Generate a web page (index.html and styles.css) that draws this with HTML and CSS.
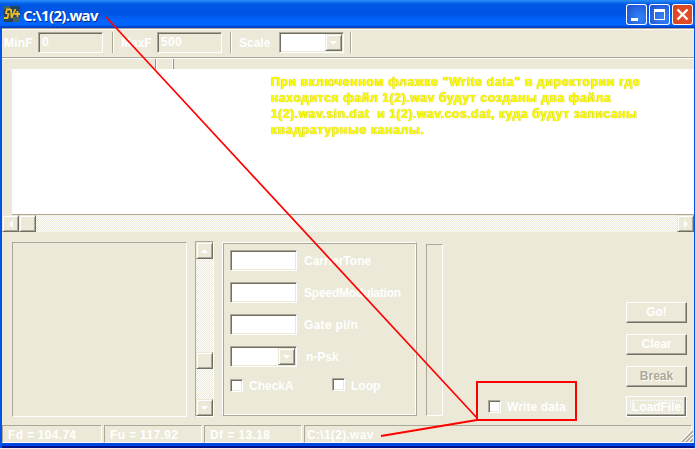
FILE: index.html
```html
<!DOCTYPE html>
<html lang="ru">
<head>
<meta charset="utf-8">
<title>C:\1(2).wav</title>
<link rel="stylesheet" href="styles.css">
</head>
<body>
<div class="window">
  <header class="titlebar">
    <svg class="app-icon" width="16" height="16" viewBox="0 0 16 16"><rect width="16" height="16" fill="#264458"/><path d="M0 0h6v3H0zM9 11h7v5H9z" fill="#42626c"/><path d="M6.500 3.500H3L2 7l2.500 1-1 4H0M7 3l.5 9L11.500 3M10.500 8H16M13.500 5v6" fill="none" stroke="#eebc22" stroke-width="1.800"/></svg>
    <h1>C:\1(2).wav</h1>
    <div class="caption-buttons">
      <span class="cap"><svg width="21" height="21"><path d="M5 14h7v3H5z" fill="#fff"/></svg></span>
      <span class="cap"><svg width="21" height="21"><path d="M5 5h11v11H5zM6 8v7h9V8z" fill="#fff" fill-rule="evenodd"/></svg></span>
      <span class="cap close"><svg width="21" height="21"><path d="M5.500 5.500l10 10M15.500 5.500l-10 10" stroke="#fff" stroke-width="2.400"/></svg></span>
    </div>
  </header>
  <div class="toolbar">
    <label class="minf">MinF</label><div class="field tool-field">0</div><i class="sep"></i>
    <label class="maxf">MaxF</label><div class="field tool-field">500</div><i class="sep second-sep"></i>
    <label class="scale">Scale</label>
    <div class="field combo"><span class="drop"><svg width="7" height="4"><path d="M0 0h7L3.500 4z" fill="#fff"/></svg></span></div><i class="sep last"></i>
  </div>
  <div class="ruler"><i class="tick"></i><i class="tick second"></i></div>
  <div class="plot">
    <p><span class="l1">При включенном флажке "Write data" в директории где</span><br><span class="l2">находится файл 1(2).wav будут созданы два файла</span><br><span class="l3">1(2).wav.sin.dat&nbsp; и 1(2).wav.cos.dat, куда будут записаны</span><br><span class="l4">квадратурные каналы.</span></p>
  </div>
  <div class="hscroll dither">
    <span class="knob"><svg width="4" height="8"><path d="M4 0v8L0 4z" fill="#fff"/></svg></span><span class="knob"></span>
    <span class="knob end"><svg width="4" height="8"><path d="M0 0v8l4-4z" fill="#fff"/></svg></span>
  </div>
  <main class="body">
    <div class="list sunk"></div>
    <div class="vscroll dither">
      <span class="knob"><svg width="7" height="4"><path d="M0 4h7L3.500 0z" fill="#fff"/></svg></span>
      <span class="knob thumb"></span>
      <span class="knob bottom"><svg width="7" height="4"><path d="M0 0h7L3.500 4z" fill="#fff"/></svg></span>
    </div>
    <section class="group">
      <div class="row"><div class="field"></div><label class="carrier">CarrierTone</label></div>
      <div class="row"><div class="field"></div><label class="speed">SpeedModulation</label></div>
      <div class="row"><div class="field"></div><label class="gate">Gate pi/n</label></div>
      <div class="row"><div class="field combo"><span class="drop"><svg width="7" height="4"><path d="M0 0h7L3.500 4z" fill="#fff"/></svg></span></div><label class="psk">n-Psk</label></div>
      <div class="checks"><span class="box"></span><label class="checka">CheckA</label><span class="box loopbox"></span><label class="loop">Loop</label></div>
    </section>
    <div class="meter sunk"></div>
    <div class="write"><span class="box"></span><label class="writelabel">Write data</label></div>
    <div class="buttons">
      <button>Go!</button><button>Clear</button><button class="disabled">Break</button><button class="load"><span>LoadFile</span></button>
    </div>
  </main>
  <footer class="status">
    <div class="sunk s1"><span>Fd = 104.74</span></div><div class="sunk s2"><span>Fu = 117.92</span></div><div class="sunk s3"><span>Df = 13.18</span></div><div class="sunk s4"><span>C:\1(2).wav</span></div>
    <svg class="grip" width="12" height="12"><path d="M1 12L12 1M5 12L12 5M9 12l3-3" stroke="#aca899" stroke-width="1.600"/><path d="M0 11L11 0M4 11L12 3M8 11l4-4" stroke="#fff"/></svg>
  </footer>
</div>
<svg class="notes" width="695" height="449" fill="none" stroke="#f00">
  <g shape-rendering="crispEdges"><rect x="477" y="382" width="99" height="38" stroke-width="2"/></g>
  <path d="M106 17L477 418" stroke-width="1.700"/><path d="M381 436L477 420" stroke-width="2"/>
</svg>
</body>
</html>
```
FILE: styles.css
```css
* { box-sizing: border-box; }
body { margin: 0; width: 695px; height: 449px; overflow: hidden; background: #f4f2e8; font: bold 12px/16px "Liberation Sans", sans-serif; color: #fff; }
svg { display: block; }
label, span, h1 { white-space: pre; }
.window { width: 695px; height: 448px; background: #ece9d8; border: solid #0054e8; border-width: 0 1px 0 2px; box-shadow: inset 0 -2px #00138c, inset 0 -5px #0046e0; }
.titlebar { height: 28px; margin: 0 -1px 0 -2px; padding: 0 2px 0 4px; display: flex; align-items: center; background: linear-gradient(#2a8cf8 0, #1479f0 2px, #0058e6 4px, #0054e3 14px, #0062fc 19px, #0066ff 25px, #0040c8 27px, #0040c8 28px); }
h1 { margin: 1px 0 0 3px; font: bold 15px/20px "Open Sans", sans-serif; text-shadow: 1px 1px #0a2c88; width: 76px; letter-spacing: -.65px; }
.caption-buttons { margin: 1px 0 0 auto; display: flex; gap: 2px; }
.cap { width: 21px; height: 21px; border-radius: 3px; background: radial-gradient(circle at 65% 65%, #3484fa, #245edb 65%, #1c49bc); box-shadow: inset 0 0 0 1px #fff; }
.close { background: radial-gradient(circle at 60% 60%, #e5512a, #d84824 65%, #bd3515); }
.toolbar { height: 31px; border-top: 1px solid #aca899; border-bottom: 1px solid #fff; box-shadow: inset 0 1px #fff, inset 0 -1px #aca899; display: flex; padding: 3px 0 0 2px; }
.toolbar label { line-height: 22px; height: 21px; }
.minf, .maxf { width: 34px; letter-spacing: .2px; }
.maxf { width: 36px; letter-spacing: 0; }
.scale { width: 40px; }
.field { width: 67px; height: 21px; background: #fff; border: 1px solid; border-color: #aca899 #fff #fff #aca899; box-shadow: inset 1px 1px #716f64, inset -1px -1px #ece9d8; padding: 1px 0 0 3px; flex: none; }
.tool-field { width: 65px; background: #ece9d8; box-shadow: inset 1px 1px #716f64; letter-spacing: .3px; }
.sep { width: 2px; height: 21px; margin: 0 7px 0 9px; background: #aca899; border-right: 1px solid #fff; }
.second-sep { margin-left: 8px; }
.toolbar .combo { width: 65px; }
.sep.last { margin-left: 6px; }
.combo { padding: 1px; }
.drop, .knob { display: flex; align-items: center; justify-content: center; width: 17px; height: 17px; background: #ece9d8; border: 1px solid; border-color: #ece9d8 #716f64 #716f64 #ece9d8; box-shadow: inset 1px 1px #fff, inset -1px -1px #aca899; }
.drop { margin-left: auto; }
.ruler { height: 10px; padding-left: 153px; display: flex; gap: 15px; }
.tick { width: 2px; height: 10px; background: #fff; border-left: 1px solid #00f000; }
.second { border-left: 0; border-right: 1px solid #00f000; }
.plot { height: 146px; margin-left: 10px; background: #fff; border-bottom: 1px solid #aca899; padding: 5px 0 0 259px; }
.plot p { margin: 0; color: #ff0; text-shadow: 0 0 1px #a79e00; font-size: 12.5px; }
.l1 { letter-spacing: .51px; }
.l2 { letter-spacing: .43px; }
.l3 { letter-spacing: .4px; }
.l4 { letter-spacing: .55px; }
.dither { background: repeating-conic-gradient(#fff 0 25%, #ece9d8 0 50%) 0 0 / 2px 2px; }
.hscroll { height: 17px; display: flex; }
.knob { flex: none; }
.end { margin-left: auto; }
.body { height: 193px; display: flex; align-items: flex-start; padding: 9px 0 0 10px; }
.sunk { border: 1px solid; border-color: #aca899 #fff #fff #aca899; }
.list { width: 175px; height: 175px; margin-top: 1px; }
.vscroll { width: 19px; height: 176px; margin-left: 8px; border: 1px solid; border-color: #aca899 #fff #fff #aca899; display: flex; flex-direction: column; }
.thumb { margin-top: 93px; }
.bottom { margin-top: auto; }
.group { width: 195px; height: 174px; margin: 1px 0 0 8px; border: 1px solid; border-color: #fff #aca899 #aca899 #fff; box-shadow: inset 1px 1px #aca899, inset -1px -1px #fff; padding: 7px 0 0 7px; }
.row { display: flex; height: 32px; }
.row label { margin-left: 7px; line-height: 23px; }
.row .psk { margin-left: 9px; }
.speed { letter-spacing: -.2px; }
.gate { letter-spacing: .3px; }
.box { width: 13px; height: 13px; background: #fff; border: 1px solid; border-color: #aca899 #fff #fff #aca899; box-shadow: inset 1px 1px #716f64, inset -1px -1px #ece9d8; flex: none; }
.checks { display: flex; padding-top: 1px; }
.checks label { margin: -1px 0 0 6px; width: 83px; }
.checks .loop { width: auto; }
.loopbox { margin-top: -1px; }
.meter { width: 17px; height: 172px; margin: 3px 0 0 9px; }
.write { display: flex; margin: 159px 0 0 45px; }
.write label { margin: -1px 0 0 6px; width: 60px; letter-spacing: .1px; }
.buttons { margin: 61px 0 0 59px; display: flex; flex-direction: column; gap: 11px; }
button { width: 61px; height: 21px; padding: 0 0 1px; background: #ece9d8; border: 1px solid; border-color: #fff #716f64 #716f64 #fff; box-shadow: inset -1px -1px #aca899; font: inherit; color: #fff; }
.disabled { color: #aca899; text-shadow: 1px 1px #fff; }
.load { margin-top: -2px; border-color: #fff; box-shadow: inset -1px -1px #716f64, inset -2px -2px #aca899; padding: 0; }
.load span { display: block; width: 53px; height: 14px; margin: 0 auto; border: 1px dotted #fff; line-height: 13px; }
.status { height: 18px; display: flex; position: relative; line-height: 18px; }
.s1 { width: 100px; padding-left: 5px; margin-right: 2px; letter-spacing: .3px; }
.s2 { width: 98px; padding-left: 5px; margin-right: 2px; letter-spacing: .35px; }
.s3 { width: 98px; padding-left: 5px; margin-right: 2px; letter-spacing: .4px; }
.s4 { width: 388px; padding-left: 2px; letter-spacing: .3px; }
.grip { position: absolute; right: 1px; bottom: 1px; }
.notes { position: absolute; left: 0; top: 0; }
```
